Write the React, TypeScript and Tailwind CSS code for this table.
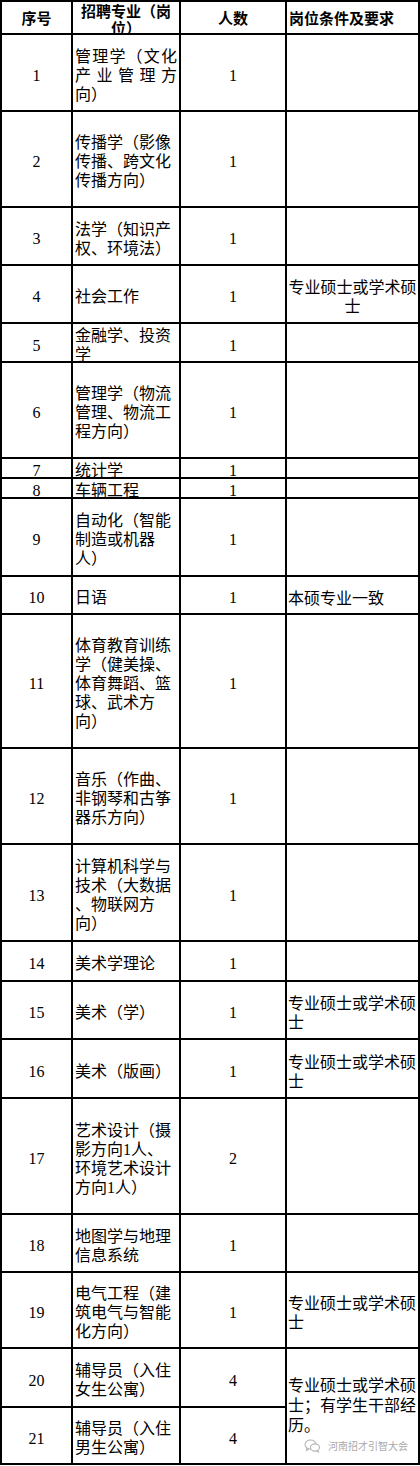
import React from "react";

type Row = {
  no: string;
  major: string[];
  count: string;
  req?: string[];
  reqCenter?: boolean;
  spread?: boolean;
  merged?: boolean;
  skipReq?: boolean;
};

const MASTER = ["专业硕士或学术硕", "士"];

const rows: Row[] = [
  { no: "1", major: ["管理学（文化", "产业管理方", "向）"], count: "1", spread: true },
  { no: "2", major: ["传播学（影像", "传播、跨文化", "传播方向）"], count: "1" },
  { no: "3", major: ["法学（知识产", "权、环境法）"], count: "1" },
  { no: "4", major: ["社会工作"], count: "1", req: MASTER, reqCenter: true },
  { no: "5", major: ["金融学、投资", "学"], count: "1" },
  { no: "6", major: ["管理学（物流", "管理、物流工", "程方向）"], count: "1" },
  { no: "7", major: ["统计学"], count: "1" },
  { no: "8", major: ["车辆工程"], count: "1" },
  { no: "9", major: ["自动化（智能", "制造或机器", "人）"], count: "1" },
  { no: "10", major: ["日语"], count: "1", req: ["本硕专业一致"] },
  { no: "11", major: ["体育教育训练", "学（健美操、", "体育舞蹈、篮", "球、武术方", "向）"], count: "1" },
  { no: "12", major: ["音乐（作曲、", "非钢琴和古筝", "器乐方向）"], count: "1" },
  { no: "13", major: ["计算机科学与", "技术（大数据", "、物联网方", "向）"], count: "1" },
  { no: "14", major: ["美术学理论"], count: "1" },
  { no: "15", major: ["美术（学）"], count: "1", req: MASTER },
  { no: "16", major: ["美术（版画）"], count: "1", req: MASTER },
  { no: "17", major: ["艺术设计（摄", "影方向1人、", "环境艺术设计", "方向1人）"], count: "2" },
  { no: "18", major: ["地图学与地理", "信息系统"], count: "1" },
  { no: "19", major: ["电气工程（建", "筑电气与智能", "化方向）"], count: "1", req: MASTER },
  { no: "20", major: ["辅导员（入住", "女生公寓）"], count: "4", req: ["专业硕士或学术硕", "士；有学生干部经", "历。"], merged: true },
  { no: "21", major: ["辅导员（入住", "男生公寓）"], count: "4", skipReq: true },
];

function WeChatMark() {
  return (
    <svg width="17" height="14" viewBox="0 0 17 14" fill="none" stroke="#b5b5b5" strokeWidth="1.1">
      <ellipse cx="6.5" cy="5.5" rx="5.5" ry="4.5" />
      <path d="M3 9.2 L2.4 11.4 L5 10" />
      <ellipse cx="11" cy="8.5" rx="4.5" ry="3.6" fill="white" />
      <path d="M13.6 11.5 L14.4 13 L12.3 12" />
    </svg>
  );
}

export default function App() {
  return (
    <div className="w-[420px] h-[1466px] bg-white font-['Liberation_Serif','Noto_Sans_CJK_SC',serif] text-black">
      <div className="grid w-[420px] grid-cols-[69px_106px_104px_131px] grid-rows-[31px_75px_94px_56px_56px_37px_94px_18px_18px_76px_36px_132px_94px_95px_38px_56px_57px_114px_56px_74px_57px_55px] gap-[2px] bg-black p-[2px]">
        {/* header */}
        <div className="flex items-center justify-center overflow-hidden bg-white pt-[4px] text-[15px] font-bold leading-[17px]">
          序号
        </div>
        <div className="overflow-hidden bg-white pt-[2px] text-center text-[15px] font-bold leading-[17px]">
          招聘专业（岗
          <br />
          位）
        </div>
        <div className="flex items-center justify-center overflow-hidden bg-white pt-[4px] text-[15px] font-bold leading-[17px]">
          人数
        </div>
        <div className="flex items-center overflow-hidden bg-white pl-[2px] pt-[4px] text-[15px] font-bold leading-[17px]">
          岗位条件及要求
        </div>

        {rows.map((r) => (
          <React.Fragment key={r.no}>
            <div className="flex items-center justify-center overflow-hidden bg-white pt-[5px] text-[16px] leading-[19px]">
              {r.no}
            </div>
            <div className="flex flex-col justify-center overflow-hidden bg-white pl-[2px] pr-[2px] pt-[5px] text-[16px] leading-[19px] whitespace-nowrap">
              {r.major.map((line, i) =>
                r.spread && i < 2 ? (
                  <div key={i} className="flex justify-between">
                    {Array.from(line).map((ch, j) => (
                      <span key={j}>{ch}</span>
                    ))}
                  </div>
                ) : (
                  <div key={i}>{line}</div>
                )
              )}
            </div>
            <div className="flex items-center justify-center overflow-hidden bg-white pt-[5px] text-[16px] leading-[19px]">
              {r.count}
            </div>
            {!r.skipReq && (
              <div
                className={
                  r.merged
                    ? "relative row-span-2 flex flex-col justify-center overflow-hidden bg-white pl-[1px] text-[16px] leading-[20px] whitespace-nowrap"
                    : r.reqCenter
                    ? "flex flex-col items-center justify-center overflow-hidden bg-white pt-[6px] text-[16px] leading-[19px] whitespace-nowrap"
                    : "flex flex-col justify-center overflow-hidden bg-white pl-[1px] pt-[6px] text-[16px] leading-[19px] whitespace-nowrap"
                }
              >
                {r.req?.map((line, i) => (
                  <div key={i}>{line}</div>
                ))}
                {r.merged && (
                  <div className="absolute left-[17px] top-[90px] flex items-center gap-[7px] font-['Noto_Sans_CJK_SC',sans-serif] text-[10px] leading-[14px] text-[#a9a9a9]">
                    <WeChatMark />
                    <span>河南招才引智大会</span>
                  </div>
                )}
              </div>
            )}
          </React.Fragment>
        ))}
      </div>
    </div>
  );
}
